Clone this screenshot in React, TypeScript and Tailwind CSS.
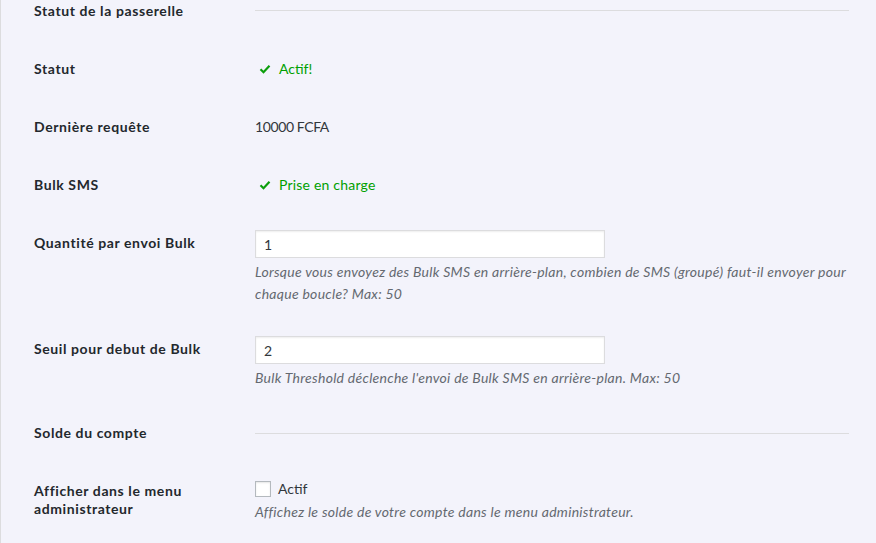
import React from "react";

const font = { fontFamily: '"Lato", "Liberation Sans", sans-serif' };

function Check() {
    return (
        <svg width="12" height="12" viewBox="0 0 20 20" className="shrink-0">
            <path d="M2.5 10.5 L7.5 15.5 L17.5 4.5" fill="none" stroke="#0b9e0b" strokeWidth="3.6" />
        </svg>
    );
}

function Row({
    label,
    children,
    first,
}: {
    label: React.ReactNode;
    children?: React.ReactNode;
    first?: boolean;
}) {
    return (
        <div className="flex">
            <div
                className={`w-[221px] shrink-0 pr-2.5 text-[14px] leading-[18px] font-bold tracking-[0.6px] text-[#23282d] ${
                    first ? "pt-[2px] pb-5" : "py-5"
                }`}
            >
                {label}
            </div>
            <div className={`w-[594px] ${first ? "pt-0" : "py-[15px]"}`}>{children}</div>
        </div>
    );
}

function Heading({ first }: { first?: boolean }) {
    return (
        <div className={first ? "pt-[10px]" : "pt-[14px]"}>
            <div className="h-px bg-[#dcdcde]" />
        </div>
    );
}

export default function App() {
    return (
        <div
            className="w-[876px] h-[543px] overflow-hidden bg-[#f3f3fb] border-l border-[#dcdcde] pl-[33px] text-[14px] text-[#32373c]"
            style={font}
        >
            <Row label="Statut de la passerelle" first>
                <Heading first />
            </Row>

            <Row label="Statut">
                <div className="flex items-center gap-[8px] pl-[4px] pt-[5px] leading-[18px] text-[#00a000]">
                    <Check />
                    <span>Actif!</span>
                </div>
            </Row>

            <Row label="Dernière requête">
                <div className="pt-[5px] leading-[18px] tracking-[-0.4px]">10000 FCFA</div>
            </Row>

            <Row label="Bulk SMS">
                <div className="flex items-center gap-[8px] pl-[4px] pt-[5px] leading-[18px] text-[#00a000] tracking-[0.2px]">
                    <Check />
                    <span>Prise en charge</span>
                </div>
            </Row>

            <Row label="Quantité par envoi Bulk">
                <input
                    type="text"
                    defaultValue="1"
                    className="mt-px block w-[350px] h-[28px] px-[8px] bg-white border border-[#dcdcde] shadow-[inset_0_1px_2px_rgba(0,0,0,0.07)] text-[14px] text-[#32373c] outline-none"
                    style={font}
                />
                <p className="mt-[3px] text-[14px] leading-[22px] italic tracking-[0.28px] text-[#646970] whitespace-nowrap">
                    Lorsque vous envoyez des Bulk SMS en arrière-plan, combien de SMS (groupé) faut-il envoyer pour
                    <br />
                    chaque boucle? Max: 50
                </p>
            </Row>

            <Row label="Seuil pour debut de Bulk">
                <input
                    type="text"
                    defaultValue="2"
                    className="mt-px block w-[350px] h-[28px] px-[8px] bg-white border border-[#dcdcde] shadow-[inset_0_1px_2px_rgba(0,0,0,0.07)] text-[14px] text-[#32373c] outline-none"
                    style={font}
                />
                <p className="mt-[3px] text-[14px] leading-[22px] italic tracking-[0.28px] text-[#646970]">
                    Bulk Threshold déclenche l'envoi de Bulk SMS en arrière-plan. Max: 50
                </p>
            </Row>

            <Row label="Solde du compte">
                <Heading />
            </Row>

            <Row
                label={
                    <>
                        Afficher dans le menu
                        <br />
                        administrateur
                    </>
                }
            >
                <label className="flex items-center gap-[7px] pt-[3px] leading-[18px]">
                    <span className="block w-[16px] h-[16px] bg-white border border-[#b4b9be] shadow-[inset_0_1px_2px_rgba(0,0,0,0.1)]" />
                    <span>Actif</span>
                </label>
                <p className="mt-[3px] text-[14px] leading-[22px] italic tracking-[0.28px] text-[#646970]">
                    Affichez le solde de votre compte dans le menu administrateur.
                </p>
            </Row>
        </div>
    );
}
